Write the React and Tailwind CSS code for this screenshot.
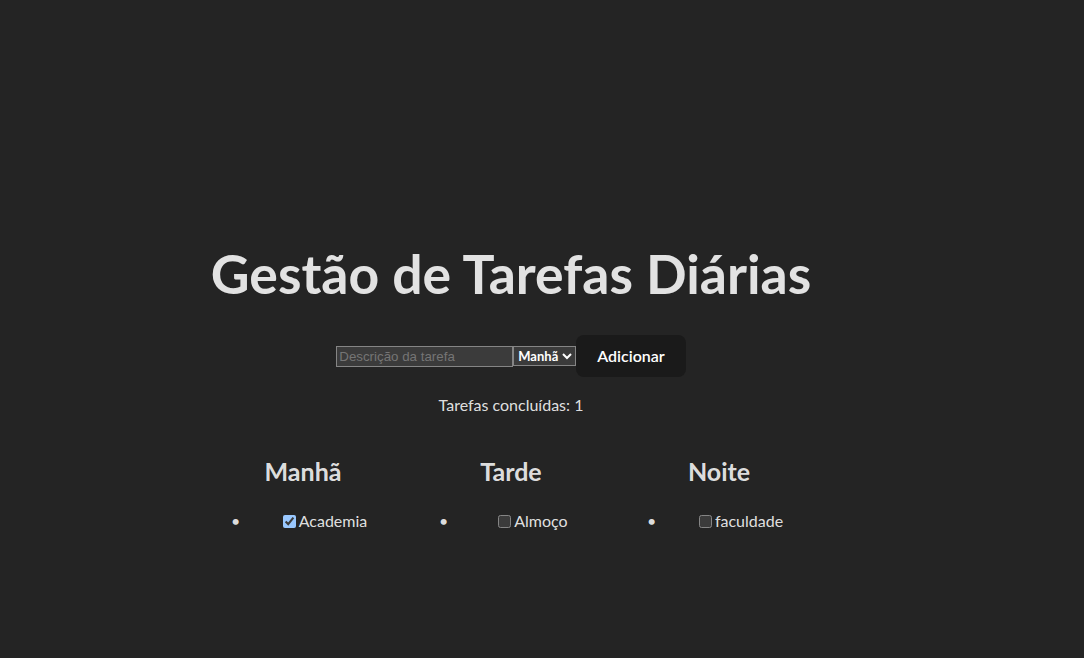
import React, { useState } from "react";

const PERIODS = ["Manhã", "Tarde", "Noite"];

export default function App() {
  const [tasks, setTasks] = useState([
    { id: 1, text: "Academia", period: "Manhã", done: true },
    { id: 2, text: "Almoço", period: "Tarde", done: false },
    { id: 3, text: "faculdade", period: "Noite", done: false },
  ]);
  const [desc, setDesc] = useState("");
  const [period, setPeriod] = useState("Manhã");

  function addTask() {
    if (!desc.trim()) return;
    setTasks([...tasks, { id: Date.now(), text: desc, period, done: false }]);
    setDesc("");
  }

  function toggle(id) {
    setTasks(tasks.map((t) => (t.id === id ? { ...t, done: !t.done } : t)));
  }

  const doneCount = tasks.filter((t) => t.done).length;

  return (
    <div
      className="min-h-screen bg-[#242424] text-[rgba(255,255,255,0.87)] [color-scheme:dark] pt-[179px]"
      style={{ fontFamily: 'Lato, "Open Sans", sans-serif' }}
    >
      <div className="w-[1022px] p-8 text-center">
        <h1 className="text-[53.5px] leading-[56.3px] font-bold my-[34px]">
          Gestão de Tarefas Diárias
        </h1>

        <div className="flex items-center justify-center">
          <input
            value={desc}
            onChange={(e) => setDesc(e.target.value)}
            placeholder="Descrição da tarefa"
            className="w-[177px] h-[21px] px-[2px] bg-[#3b3b3b] border border-[#858585] text-[13.33px] placeholder:text-[#757575]"
            style={{ fontFamily: '"Liberation Sans", Arial, sans-serif' }}
          />
          <select
            value={period}
            onChange={(e) => setPeriod(e.target.value)}
            className="w-[63px] h-[20px] bg-[#3b3b3b] border border-[#858585] text-[13px] font-bold text-white"
          >
            {PERIODS.map((p) => (
              <option key={p}>{p}</option>
            ))}
          </select>
          <button
            onClick={addTask}
            className="rounded-lg bg-[#1a1a1a] px-[21px] py-[9px] text-base font-semibold text-white"
          >
            Adicionar
          </button>
        </div>

        <p className="my-4 leading-6">Tarefas concluídas: {doneCount}</p>

        <div className="flex justify-center">
          {PERIODS.map((p) => (
            <div key={p} className="w-[208px]">
              <h2 className="text-[25px] font-bold leading-9 my-5">{p}</h2>
              <ul className="pl-8 my-4">
                {tasks
                  .filter((t) => t.period === p)
                  .map((t) => (
                    <li key={t.id} className="flex leading-6">
                      <span className="w-2 text-center">•</span>
                      <span className="flex-1 text-center">
                        <input
                          type="checkbox"
                          checked={t.done}
                          onChange={() => toggle(t.id)}
                          className="w-[13px] h-[13px] ml-1 mr-[3px] align-[-1px]"
                        />
                        {t.text}
                      </span>
                    </li>
                  ))}
              </ul>
            </div>
          ))}
        </div>
      </div>
    </div>
  );
}
